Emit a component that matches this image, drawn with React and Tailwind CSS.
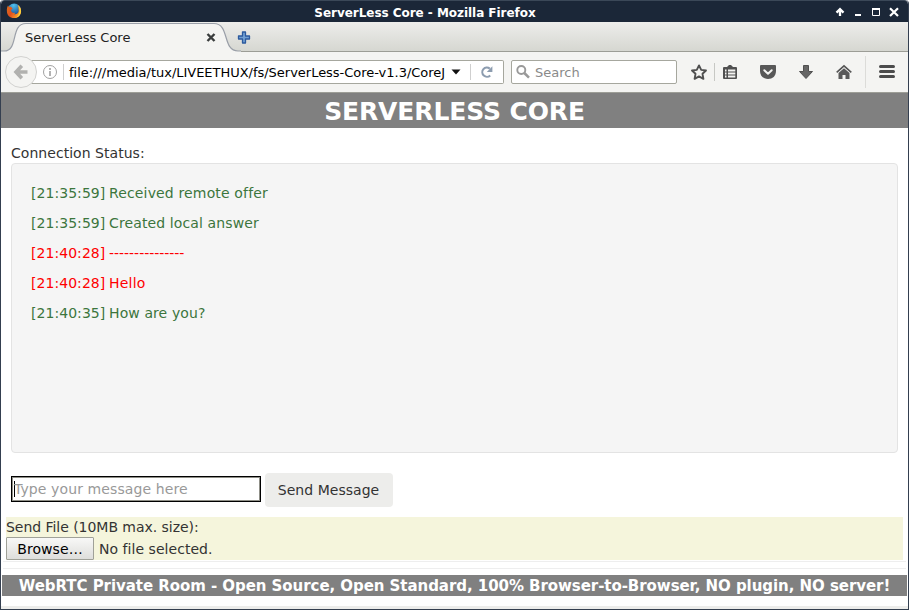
import React from "react";

const messages = [
  { time: "21:35:59", text: "Received remote offer", color: "text-[#3c763d]", spacing: "tracking-[0.15px]" },
  { time: "21:35:59", text: "Created local answer", color: "text-[#3c763d]", spacing: "tracking-[0.12px]" },
  { time: "21:40:28", text: "---------------", color: "text-[#ff0000]", spacing: "tracking-[-0.03px]" },
  { time: "21:40:28", text: "Hello", color: "text-[#ff0000]", spacing: "tracking-[0.2px]" },
  { time: "21:40:35", text: "How are you?", color: "text-[#3c763d]", spacing: "tracking-[0.1px]" },
];

function FirefoxLogo() {
  return (
    <svg className="-mt-[2px] ml-[5px] h-[16px] w-[16px] shrink-0" viewBox="0 0 16 16">
      <defs>
        <linearGradient id="fox" x1="0" y1="0" x2="1" y2=".5">
          <stop offset="0" stopColor="#d9701f" />
          <stop offset=".5" stopColor="#e2501d" />
          <stop offset="1" stopColor="#f9a52a" />
        </linearGradient>
        <radialGradient id="globe" cx=".45" cy=".15" r=".8">
          <stop offset="0" stopColor="#4fc0ee" />
          <stop offset="1" stopColor="#153f87" />
        </radialGradient>
      </defs>
      <circle cx="8.2" cy="7.2" r="6.8" fill="url(#globe)" />
      <path d="M2 2.6 C2.3 3.5 2.8 3.9 3.7 3.9 C4.4 3.6 5 3.7 5.4 4.2 L6.6 5.6 C6.2 6.5 5.4 6.4 5 7.4 C5.2 9.2 7 10.4 9 9.8 C9.4 10.4 8.4 11 7.6 11.1 C10.2 12 12.6 10.6 12.7 7.8 C12.7 6.2 12.3 4.8 11.6 3.6 C12.4 4.1 12.9 4.8 13.2 5.6 C13 3.9 12.2 2.6 11.2 1.6 C13.7 2.8 15.1 5.5 15.1 8.2 C15.1 12.2 12 15.1 8 15.1 C4 15.1 1 12.1 .9 8.2 C.8 5.8 1.1 4.3 2 2.6Z" fill="url(#fox)" />
      <path d="M11.6 1.9 C14.4 3.6 15.2 6.3 15 8.5 C14.8 11.5 13 13.7 10.2 14.6 C12.8 12.5 13.7 9.5 13.3 6.8 C13.1 4.9 12.6 3.4 11.6 1.9Z" fill="#fbd23d" />
    </svg>
  );
}

function TitleBar() {
  return (
    <div className="relative flex h-[22px] items-center justify-between rounded-t-[4px] border-t border-[#3b4858] bg-[#1b2738]">
      <FirefoxLogo />
      <div className="absolute inset-x-0 top-[4px] ml-[-59px] text-center text-[12px] leading-[16px] font-bold tracking-[-0.04px] text-white [font-family:'DejaVu_Sans',sans-serif]">
        ServerLess Core - Mozilla Firefox
      </div>
      <svg className="h-[21px] w-[78px]" viewBox="830 1 78 21" fill="none" stroke="#fff">
        <path d="M840 16 V10 M836.5 12.6 L840 9.1 L843.5 12.6" strokeWidth="2.3" />
        <path d="M855 15 H861" strokeWidth="2" />
        <path d="M872.5 9 H879.5 V15.5 H872.5Z" strokeWidth="1" />
        <path d="M872 9 H880" strokeWidth="2" />
        <path d="M890 8.2 L898 16 M898 8.2 L890 16" strokeWidth="2.2" />
      </svg>
    </div>
  );
}

function TabStrip() {
  return (
    <div className="relative flex h-[30px] items-center border-b border-[#9c9d96] bg-linear-to-b from-[#ededeb] to-[#d6d7d1]">
      <svg className="absolute top-0 left-0 h-[30px] w-[240px]" viewBox="1 0 240 30">
        <path d="M1 29 H4 C19 29 10 1.5 26 1.5 H214 C230 1.5 222 29 238 29 H241 V30 H1Z" fill="#f4f4f2" />
        <path d="M1 29 H4 C19 29 10 1.5 26 1.5 H214 C230 1.5 222 29 238 29 H241" fill="none" stroke="#9a9fa8" strokeWidth="1.2" />
      </svg>
      <div className="relative mt-[2px] ml-[24px] w-[181px] text-[13px] leading-[16px] text-[#222] [font-family:'DejaVu_Sans',sans-serif]">ServerLess Core</div>
      <svg className="relative mt-[2px] h-[9px] w-[10px]" viewBox="0 0 10 9"><path d="M1.5 1 L8.5 8 M8.5 1 L1.5 8" stroke="#3a3d3d" strokeWidth="2.4" /></svg>
      <svg className="relative mt-[2px] ml-[21px] h-[13px] w-[14px]" viewBox="0 0 13 13"><path d="M5 1 H8 V5 H12 V8 H8 V12 H5 V8 H1 V5 H5Z" fill="#719fd2" stroke="#2c5a9e" strokeWidth="1.3" strokeLinejoin="round" /></svg>
    </div>
  );
}

function ToolbarIcons() {
  return (
    <svg className="h-[40px] w-[231px]" viewBox="677 52 231 40">
      <path d="M699 65.4 L701.2 69.9 L706 70.5 L702.5 73.8 L703.4 78.8 L699 76.4 L694.6 78.8 L695.5 73.8 L692 70.5 L696.8 69.9Z" fill="none" stroke="#505050" strokeWidth="1.9" strokeLinejoin="round" />
      <path d="M714.5 63 V81" stroke="#c7c8c4" />
      <path d="M724 67 H727 L729 65 H731 L733 67 H736 Q737 67 737 68 V78 Q737 79 736 79 H724 Q723 79 723 78 V68 Q723 67 724 67Z" fill="#505050" />
      <path d="M725 70.5 H726.5 M725 73.5 H726.5 M725 76.5 H726.5 M728 70.5 H735.3 M728 73.5 H735.3 M728 76.5 H735.3" stroke="#f4f4f2" strokeWidth="1.8" />
      <path d="M761 65 H775 Q776 65 776 66 V71 C776 76 772.5 79 768 79 S760 76 760 71 V66 Q760 65 761 65Z" fill="#585858" />
      <path d="M764.3 70.2 L768 73.7 L771.7 70.2" fill="none" stroke="#f4f4f2" strokeWidth="2" strokeLinecap="round" strokeLinejoin="round" />
      <path d="M803.5 65.5 H808.5 V71.5 H812.5 L806 78.5 L799.5 71.5 H803.5Z" fill="#666" stroke="#505050" />
      <path d="M836.7 72.3 L844 65.8 L851.3 72.3" fill="none" stroke="#555" strokeWidth="1.6" />
      <path d="M844 68.2 L849.5 73 V79 H845.5 V75 H842.5 V79 H838.5 V73Z" fill="#5a5a5a" />
      <path d="M865.5 56 V88" stroke="#dcdcd9" />
      <path d="M880.5 66.5 H893.5 M880.5 71.5 H893.5 M880.5 76.5 H893.5" stroke="#4c4c4c" strokeWidth="3" strokeLinecap="round" />
    </svg>
  );
}

function Toolbar() {
  return (
    <div className="flex h-[41px] items-center border-b border-[#9d9e97] bg-[#f4f4f2] text-[13px] leading-[16px] [font-family:'DejaVu_Sans',sans-serif]">
      <div className="z-10 ml-[4px] flex h-[32px] w-[32px] shrink-0 items-center justify-center rounded-full border border-[#d2d2d0] bg-[#f4f4f2]">
        <svg className="h-[16px] w-[16px]" viewBox="0 0 16 16"><path d="M8.8 1.8 L3 8 L8.8 14.2 M3 8 H14.5" fill="none" stroke="#b1b1af" strokeWidth="3.6" /></svg>
      </div>
      <div className="-ml-[6px] flex h-[24px] w-[473px] shrink-0 items-center rounded-r-[2px] border border-l-0 border-[#a6a79e] bg-white">
        <svg className="ml-[11px] h-[16px] w-[16px] shrink-0" viewBox="0 0 16 16"><circle cx="8" cy="8" r="6.5" fill="none" stroke="#a0a0a0" /><path d="M8 7 V12 M8 4 V6" stroke="#999" strokeWidth="1.5" /></svg>
        <div className="ml-[5px] h-[16px] w-px shrink-0 bg-[#cfcfcf]" />
        <div className="ml-[5px] w-[377px] shrink-0 pt-px tracking-[-0.02px] whitespace-nowrap text-black">file:///media/tux/LIVEETHUX/fs/ServerLess-Core-v1.3/CoreJ</div>
        <svg className="ml-[5px] h-[6px] w-[10px] shrink-0" viewBox="0 0 10 6"><path d="M0.5 .5 H9.5 L5 5.5Z" fill="#111" /></svg>
        <div className="ml-[9px] h-[16px] w-px shrink-0 bg-[#cfcfcf]" />
        <svg className="ml-[9px] h-[14px] w-[14px] shrink-0" viewBox="0 0 14 14"><path d="M9.8 3.6 A4.6 4.6 0 1 0 10.2 10.4" fill="none" stroke="#8c9caf" strokeWidth="2.1" /><path d="M12.4 1.2 V7 H6.8Z" fill="#8c9caf" /></svg>
      </div>
      <div className="ml-[7px] flex h-[24px] w-[166px] shrink-0 items-center rounded-[2px] border border-[#a6a79e] bg-white text-[#8a8a8a]">
        <svg className="ml-[3px] h-[16px] w-[16px]" viewBox="0 0 16 16"><circle cx="6.3" cy="6" r="4" fill="none" stroke="#999" strokeWidth="1.9" /><path d="M9.3 9 L14 13.7" stroke="#999" strokeWidth="2.5" /></svg>
        <span className="ml-[4px] pt-px">Search</span>
      </div>
      <ToolbarIcons />
    </div>
  );
}

export default function App() {
  return (
    <div className="flex h-[610px] w-[909px] flex-col overflow-hidden rounded-t-[4px] border-x border-b border-[#343f50] bg-white">
      <TitleBar />
      <TabStrip />
      <Toolbar />
      <main className="flex grow flex-col text-[14px] leading-[20px] text-[#333] [font-family:'DejaVu_Sans',sans-serif]">
        <h1 className="h-[35px] bg-[#808080] text-center text-[25px] leading-[37px] font-bold tracking-[-0.12px] text-white">SERVERLESS CORE</h1>
        <div className="mt-[15px] ml-[10px] tracking-[0.04px]">Connection Status:</div>
        <section className="mx-[10px] h-[290px] rounded-[4px] border border-[#e3e3e3] bg-[#f5f5f5] px-[19px] pt-[19px]">
          {messages.map((m, i) => (
            <p key={i} className={`mb-[10px] flex ${m.color}`}>
              <span className="w-[78px] shrink-0 tracking-[0.05px]">[{m.time}]</span>
              <span className={m.spacing}>{m.text}</span>
            </p>
          ))}
        </section>
        <div className="mt-[20px] ml-[10px] flex h-[34px] items-center">
          <div className="-mt-[2px] flex h-[26px] w-[250px] items-center border border-black bg-white">
            <div className="flex h-full w-full items-center border border-[#8f8f87] text-[#999]">
              <span className="ml-px h-[16px] w-px bg-black" />
              <span className="-ml-px tracking-[0.1px]">Type your message here</span>
            </div>
          </div>
          <button className="ml-[4px] h-[34px] w-[128px] rounded-[4px] bg-[#ededeb] pr-px tracking-[0.04px]">Send Message</button>
        </div>
        <div className="mt-[10px] mr-[5px] ml-[5px] h-[43px] bg-[#f5f5dc]">
          <div className="tracking-[-0.04px]">Send File (10MB max. size):</div>
          <div className="flex items-center">
            <button className="h-[23px] w-[88px] rounded-[1px] border border-[#a0a198] bg-linear-to-b from-[#f8f8f7] to-[#dededb] text-black tracking-[0.06px]">Browse…</button>
            <span className="ml-[5px] tracking-[0.04px]">No file selected.</span>
          </div>
        </div>
        <div className="mx-[2px] mt-[1px] h-[8px] border-y border-[#eeeeee]" />
        <footer className="mx-px mt-[6px] h-[21px] bg-[#808080] text-center text-[15px] leading-[22px] font-bold tracking-[-0.055px] whitespace-nowrap text-white">
          WebRTC Private Room - Open Source, Open Standard, 100% Browser-to-Browser, NO plugin, NO server!
        </footer>
        <div className="mt-auto h-[3px] bg-[#ededeb]" />
      </main>
    </div>
  );
}
